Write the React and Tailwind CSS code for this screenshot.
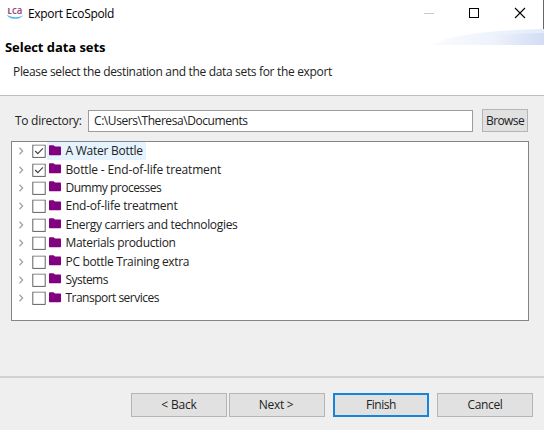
import React from "react";

const rows = [
  { label: "A Water Bottle", tracking: "tracking-[-0.25px]", checked: true, selected: true },
  { label: "Bottle - End-of-life treatment", tracking: "tracking-[-0.15px]", checked: true },
  { label: "Dummy processes", tracking: "tracking-[-0.5px]" },
  { label: "End-of-life treatment", tracking: "tracking-[-0.22px]" },
  { label: "Energy carriers and technologies", tracking: "tracking-[-0.33px]" },
  { label: "Materials production", tracking: "tracking-[-0.33px]" },
  { label: "PC bottle Training extra", tracking: "tracking-[-0.32px]" },
  { label: "Systems", tracking: "tracking-[-0.55px]" },
  { label: "Transport services", tracking: "tracking-[-0.52px]" },
];

function Logo() {
  return (
    <svg width="18" height="22" viewBox="0 0 18 22" className="shrink-0">
      <text x="1.6" y="14" fontSize="11" fontWeight="600" fontFamily="Open Sans, sans-serif" fill="#944a7d" textLength="14.8" lengthAdjust="spacingAndGlyphs">ʟca</text>
      <path d="M1 14.8C2.6 20 14.6 20.2 17 15.2C13.6 17.9 4.8 17.9 1 14.8Z" fill="#55b8e4" />
    </svg>
  );
}

function TitleBar() {
  return (
    <div className="flex h-[29px] items-start bg-white pl-1.5 text-black">
      <Logo />
      <span className="pl-1 pt-[5px] text-xs leading-[18px] tracking-[-0.33px]">Export EcoSpold</span>
      <div className="ml-auto flex h-full items-stretch">
        <svg width="120" height="29" viewBox="0 0 120 29" shapeRendering="crispEdges">
          <path d="M0 13.5H10" stroke="#c9c9c9" />
          <rect x="45.5" y="8.5" width="9" height="9" fill="none" stroke="#000" />
          <path d="M91 8L101 18M101 8L91 18" stroke="#000" strokeWidth="1.1" shapeRendering="auto" />
          <path d="M119.5 0V29" stroke="#666" />
        </svg>
      </div>
    </div>
  );
}

function Header() {
  return (
    <div className="flex h-[67px] justify-between border-b border-[#bdbdbd] bg-white">
      <div className="pl-[5px] pt-[9px]">
        <h1 className="whitespace-nowrap text-[13px] font-bold leading-[18px] tracking-[-0.06px] text-black">Select data sets</h1>
        <p className="whitespace-nowrap pl-2 pt-[7px] text-xs leading-[18px] tracking-[-0.33px]">Please select the destination and the data sets for the export</p>
      </div>
      <svg width="112" height="16" viewBox="0 0 112 16" className="shrink-0">
        <defs>
          <linearGradient id="swoosh">
            <stop offset="0" stopColor="#fafbfe" />
            <stop offset="0.55" stopColor="#eef2fb" />
            <stop offset="1" stopColor="#d2dcf4" />
          </linearGradient>
          <linearGradient id="swooshEdge">
            <stop offset="0" stopColor="#fafcff" />
            <stop offset="1" stopColor="#e3ecfb" />
          </linearGradient>
        </defs>
        <path d="M0 16C14 6 62 1 112 0V16Z" fill="url(#swooshEdge)" />
        <path d="M0 16C25 8 70 5 112 4V16Z" fill="url(#swoosh)" />
      </svg>
    </div>
  );
}

function TreeRow({ label, tracking, checked, selected }) {
  return (
    <div className="flex h-[18.4px] items-center">
      <svg width="5" height="8" viewBox="0 0 5 8" className="ml-[7px] shrink-0">
        <path d="M0.5 0.8L3.6 4L0.5 7.2" fill="none" stroke="#a3a3a3" strokeWidth="1.3" />
      </svg>
      <svg width="14" height="14" viewBox="0 0 14 14" className="ml-[8px] shrink-0 translate-y-[0.5px]">
        <rect x="0.8" y="0.5" width="12.4" height="12.4" fill="#fff" stroke="#626262" />
        {checked && <path d="M3.2 6.5L5.8 9.2L10.9 3.9" fill="none" stroke="#444" strokeWidth="1.2" />}
      </svg>
      <div className={"ml-[1px] flex h-full items-center pl-[2px] pr-[3px] " + (selected ? "bg-[#e5f3ff]" : "")}>
        <svg width="12" height="11" viewBox="0 0 12 11" className="shrink-0 -translate-y-px">
          <path d="M1 0.3H4.5L6 1.6H11C11.7 1.6 12 2 12 2.5V9.2C12 9.8 11.6 10.2 11 10.2H1C.4 10.2 0 9.8 0 9.2V1.3C0 .7.4.3 1 .3Z" fill="#800080" />
        </svg>
        <span className={"whitespace-nowrap pl-[4.5px] text-xs leading-[18px] " + tracking}>{label}</span>
      </div>
    </div>
  );
}

function Button({ children, primary, className = "" }) {
  return (
    <button className={"flex h-6 w-24 items-center justify-center bg-[#e1e1e1] text-xs leading-none " + (primary ? "border-2 border-[#1883d7] " : "border border-[#b5b5b5] ") + className}>
      {children}
    </button>
  );
}

export default function App() {
  return (
    <div className="flex h-[430px] w-[544px] flex-col overflow-hidden bg-[#efefef] font-['Open_Sans','Noto_Sans',sans-serif] text-[#222]">
      <TitleBar />
      <Header />
      <main className="flex h-[280px] flex-col">
        <div className="flex items-center pl-[15px] pt-[13px]">
          <label className="w-[73px] whitespace-nowrap text-xs leading-[18px] tracking-[-0.28px]">To directory:</label>
          <div className="flex h-[22px] w-[385px] items-center border border-[#9c9c9c] bg-white pl-[5px] text-xs tracking-[-0.43px]">C:\Users\Theresa\Documents</div>
          <button className="ml-[9px] flex h-[23px] w-[46px] items-center justify-center border border-[#b5b5b5] bg-[#e1e1e1] text-xs tracking-[-0.6px]">Browse</button>
        </div>
        <div className="ml-[11px] mt-[9px] h-[180px] w-[518px] border border-[#858585] bg-white">
          {rows.map((r) => <TreeRow key={r.label} {...r} />)}
        </div>
      </main>
      <footer className="flex flex-1 items-start border-t-2 border-[#d2d2d2] pl-[131px] pt-[15px]">
        <Button className="tracking-[-0.15px]">&lt; Back</Button>
        <Button className="ml-[2px] pr-[2px] tracking-[-0.3px]">Next &gt;</Button>
        <Button primary className="ml-2 tracking-[-0.45px]">Finish</Button>
        <Button className="ml-2 tracking-[-0.35px]">Cancel</Button>
      </footer>
    </div>
  );
}
